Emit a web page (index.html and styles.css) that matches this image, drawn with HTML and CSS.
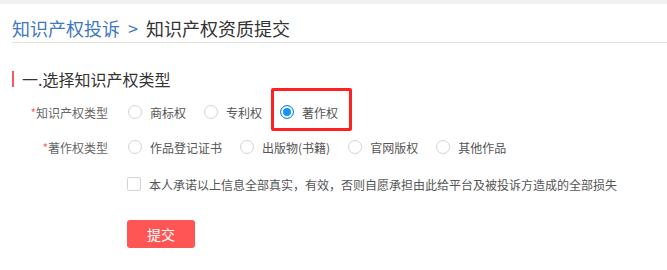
FILE: index.html
```html
<!DOCTYPE html>
<html lang="zh-CN">
<head>
<meta charset="utf-8">
<title>知识产权资质提交</title>
<link rel="stylesheet" href="styles.css">
</head>
<body>
<div class="topbar"></div>
<div class="page">
  <div class="header">
    <span class="crumb-link">知识产权投诉</span>
    <span class="crumb-sep">&gt;</span>
    <span class="crumb-current">知识产权资质提交</span>
  </div>
  <div class="section-title">一.选择知识产权类型</div>
  <div class="row row-type">
    <div class="label"><span class="req">*</span>知识产权类型</div>
    <div class="option"><span class="radio"></span><span class="opt-text">商标权</span></div>
    <div class="option"><span class="radio"></span><span class="opt-text">专利权</span></div>
    <div class="option option-marked"><span class="radio checked"></span><span class="opt-text">著作权</span><span class="mark-box"></span></div>
  </div>
  <div class="row row-sub">
    <div class="label"><span class="req">*</span>著作权类型</div>
    <div class="option"><span class="radio"></span><span class="opt-text">作品登记证书</span></div>
    <div class="option"><span class="radio"></span><span class="opt-text">出版物(书籍)</span></div>
    <div class="option"><span class="radio"></span><span class="opt-text">官网版权</span></div>
    <div class="option"><span class="radio"></span><span class="opt-text">其他作品</span></div>
  </div>
  <div class="agree">
    <span class="checkbox"></span>
    <span class="agree-text">本人承诺以上信息全部真实，有效，否则自愿承担由此给平台及被投诉方造成的全部损失</span>
  </div>
  <button class="submit">提交</button>
</div>
</body>
</html>
```
FILE: styles.css
```css
* { box-sizing: border-box; }
body {
  margin: 0;
  background: #fff;
  font-family: "Noto Sans CJK SC", "Noto Sans", sans-serif;
  color: #333;
}
.topbar {
  height: 4px;
  background: #f0f0f0;
}
.page {
  padding-left: 12px;
}
.header {
  padding-top: 12px;
  height: 39px;
  line-height: 24px;
  font-size: 18px;
  border-bottom: 1px solid #e3e3e3;
  white-space: nowrap;
}
.crumb-link { color: #3d78c0; }
.crumb-sep { color: #3d78c0; margin: 0 4px; }
.crumb-current { color: #333; }
.section-title {
  margin-top: 28px;
  height: 16px;
  line-height: 16px;
  font-size: 16px;
  border-left: 2px solid #f55a5a;
  padding-left: 8px;
  color: #333;
}
.row {
  display: flex;
  align-items: center;
  height: 24px;
  font-size: 12px;
}
.row-type { margin-top: 13px; }
.row-sub { margin-top: 11px; }
.label {
  width: 96px;
  text-align: right;
  margin-right: 20px;
  color: #666;
}
.req { color: #f56c6c; }
.option {
  display: flex;
  align-items: center;
  margin-right: 18px;
  color: #555;
  position: relative;
  height: 24px;
}
.radio {
  width: 14px;
  height: 14px;
  border: 1px solid #d4d4d4;
  border-radius: 50%;
  background: #fff;
  margin-right: 8px;
  flex: none;
}
.radio.checked {
  border-color: #1890ff;
  background: #1890ff;
  box-shadow: inset 0 0 0 2px #fff;
}
.mark-box {
  position: absolute;
  left: -9px;
  top: -12px;
  width: 81px;
  height: 43px;
  border: 3px solid #ff2020;
  border-radius: 2px;
}
.agree {
  display: flex;
  align-items: center;
  height: 24px;
  margin-top: 13px;
  margin-left: 115px;
  font-size: 12px;
  color: #555;
  white-space: nowrap;
}
.checkbox {
  width: 14px;
  height: 14px;
  border: 1px solid #d4d4d4;
  border-radius: 2px;
  margin-right: 8px;
  flex: none;
}
.submit {
  display: block;
  margin-top: 24px;
  margin-left: 115px;
  width: 68px;
  height: 28px;
  border: none;
  border-radius: 3px;
  background: #ff5555;
  color: #fff;
  font-family: inherit;
  font-size: 14px;
  padding: 0;
}
```
